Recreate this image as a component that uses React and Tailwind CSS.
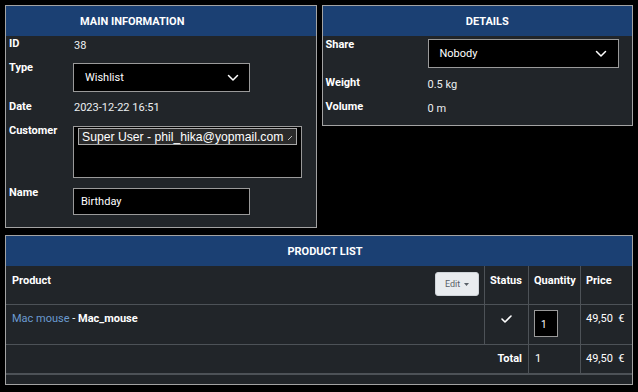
import React from "react";

const Chevron = () => (
  <svg width="12" height="8" viewBox="0 0 12 8" fill="none" stroke="white" strokeWidth="1.5" strokeLinecap="round" strokeLinejoin="round">
    <path d="M1.5 1.5 L6 6 L10.5 1.5" />
  </svg>
);

const Label = ({ children, className = "" }) => (
  <div className={`font-bold text-white text-[11px] leading-[13px] ${className}`}>{children}</div>
);

const Value = ({ children, className = "" }) => (
  <div className={`text-[#eceff1] text-[11px] leading-[13px] ${className}`}>{children}</div>
);

const Header = ({ children, className = "" }) => (
  <div className={`h-[30px] bg-[#1b4073] flex items-center justify-center pt-[2px] text-white font-bold text-[11px] uppercase ${className}`}>
    {children}
  </div>
);

export default function App() {
  return (
    <div
      className="w-[638px] h-[392px] bg-black px-[5px] pt-[5px]"
      style={{ fontFamily: "Roboto, 'Liberation Sans', sans-serif" }}
    >
      <div className="grid grid-cols-2 gap-[5px] items-start">
        {/* Main information */}
        <div className="border border-[#a3a3a3] bg-[#212529] h-[223px] flex flex-col">
          <Header className="pr-[57px]">Main information</Header>
          <div className="flex flex-col">
            <div className="flex h-[22px]">
              <Label className="w-[68px] pl-[3px] mt-[1px]">ID</Label>
              <Value className="mt-[3px]">38</Value>
            </div>
            <div className="flex h-[38px]">
              <Label className="w-[67px] pl-[3px] mt-[3px]">Type</Label>
              <div className="mt-[5px] w-[177px] h-[29px] bg-black border border-[#9a9a9a] flex items-center justify-between pl-[11px] pr-[10px]">
                <span className="text-white text-[11px] mt-[1px]">Wishlist</span>
                <Chevron />
              </div>
            </div>
            <div className="flex h-[24px]">
              <Label className="w-[68px] pl-[3px] mt-[4px]">Date</Label>
              <Value className="mt-[5px]">2023-12-22 16:51</Value>
            </div>
            <div className="flex h-[62px]">
              <Label className="w-[67px] pl-[3px] mt-[4px]">Customer</Label>
              <div className="mt-[6px] w-[229px] h-[52px] bg-black border border-[#9a9a9a] pt-[1px] pl-[4px]">
                <div className="w-[219px] h-[17px] bg-[#2a2a2a] border border-[#a8a8a8] flex items-center pl-[3px]">
                  <span
                    className="text-white text-[12.2px] leading-[14px] whitespace-nowrap"
                    style={{ fontFamily: "'Liberation Sans', Arial, sans-serif" }}
                  >
                    Super User - phil_hika@yopmail.com
                  </span>
                  <svg width="6" height="6" viewBox="0 0 6 6" className="ml-[4px] mt-[2px]">
                    <path d="M1 5 L5 1" stroke="#bdbdbd" strokeWidth="1" />
                  </svg>
                </div>
              </div>
            </div>
            <div className="flex">
              <Label className="w-[67px] pl-[3px] mt-[4px]">Name</Label>
              <div className="mt-[6px] w-[177px] h-[27px] bg-black border border-[#9a9a9a] flex items-center pl-[7px]">
                <span className="text-white text-[11px] mt-[1px]">Birthday</span>
              </div>
            </div>
          </div>
        </div>

        {/* Details */}
        <div className="border border-[#a3a3a3] bg-[#212529] h-[121px] flex flex-col">
          <Header className="pl-[20px]">Details</Header>
          <div className="flex flex-col">
            <div className="flex h-[36px]">
              <Label className="w-[105px] pl-[3px] mt-[2px]">Share</Label>
              <div className="mt-[3px] w-[191px] h-[29px] bg-black border border-[#9a9a9a] flex items-center justify-between pl-[11px] pr-[11px]">
                <span className="text-white text-[11px] mt-[1px]">Nobody</span>
                <Chevron />
              </div>
            </div>
            <div className="flex h-[24px]">
              <Label className="w-[105px] pl-[3px] mt-[4px]">Weight</Label>
              <Value className="mt-[6px]">0.5 kg</Value>
            </div>
            <div className="flex">
              <Label className="w-[105px] pl-[3px] mt-[4px]">Volume</Label>
              <Value className="mt-[6px]">0 m</Value>
            </div>
          </div>
        </div>
      </div>

      {/* Product list */}
      <div className="mt-[7px] border border-[#a3a3a3] bg-[#212529] flex flex-col">
        <Header className="pl-[12px]">Product list</Header>
        <div className="grid grid-cols-[1fr_44px_52px_52px] text-[11px] leading-[13px]">
          {/* header row */}
          <div className="h-[38px] flex justify-between items-start pl-[6px] pr-[5px]">
            <div className="font-bold text-white mt-[8px]">Product</div>
            <div className="mt-[6px] w-[44px] h-[24px] bg-[#e9ecef] border border-[#cfd4d9] rounded-[3px] flex items-center justify-center gap-[4px] text-[#5a6168] text-[9px]">
              <span>Edit</span>
              <svg width="5" height="3" viewBox="0 0 5 3"><path d="M0 0 L5 0 L2.5 3 Z" fill="#5a6168" /></svg>
            </div>
          </div>
          <div className="h-[38px] border-l border-[#4d5257] pl-[5px] pt-[8px] font-bold text-white">Status</div>
          <div className="h-[38px] border-l border-[#4d5257] pl-[5px] pt-[8px] font-bold text-white">Quantity</div>
          <div className="h-[38px] border-l border-[#4d5257] pl-[5px] pt-[8px] font-bold text-white">Price</div>

          {/* product row */}
          <div className="h-[40px] border-t border-[#4d5257] pl-[6px] pt-[7px]">
            <span className="text-[#6b9bd1]">Mac mouse</span>
            <span className="text-white"> - </span>
            <span className="text-white font-bold">Mac_mouse</span>
          </div>
          <div className="h-[40px] border-t border-l border-[#4d5257] flex justify-center pt-[10px]">
            <svg width="11" height="8" viewBox="0 0 11 8" fill="none" stroke="white" strokeWidth="1.6" strokeLinecap="round" strokeLinejoin="round">
              <path d="M1 4 L4 7 L10 1" />
            </svg>
          </div>
          <div className="h-[40px] border-t border-l border-[#4d5257] pl-[5px] pt-[5px]">
            <div className="w-[24px] h-[27px] bg-black border border-[#9a9a9a] flex items-center pl-[6px] pt-[2px] text-white text-[10px]">1</div>
          </div>
          <div className="h-[40px] border-t border-l border-[#4d5257] pl-[5px] pt-[7px] text-white whitespace-pre">49,50  €</div>

          {/* total row */}
          <div className="col-span-2 h-[29px] border-t border-[#4d5257] pr-[6px] pt-[7px] text-right font-bold text-white">Total</div>
          <div className="h-[29px] border-t border-l border-[#4d5257] pl-[6px] pt-[7px] text-white">1</div>
          <div className="h-[29px] border-t border-l border-[#4d5257] pl-[5px] pt-[7px] text-white whitespace-pre">49,50  €</div>

          {/* footer */}
          <div className="col-span-4 h-[11px] border-t-2 border-[#4d5257]"></div>
        </div>
      </div>
    </div>
  );
}
